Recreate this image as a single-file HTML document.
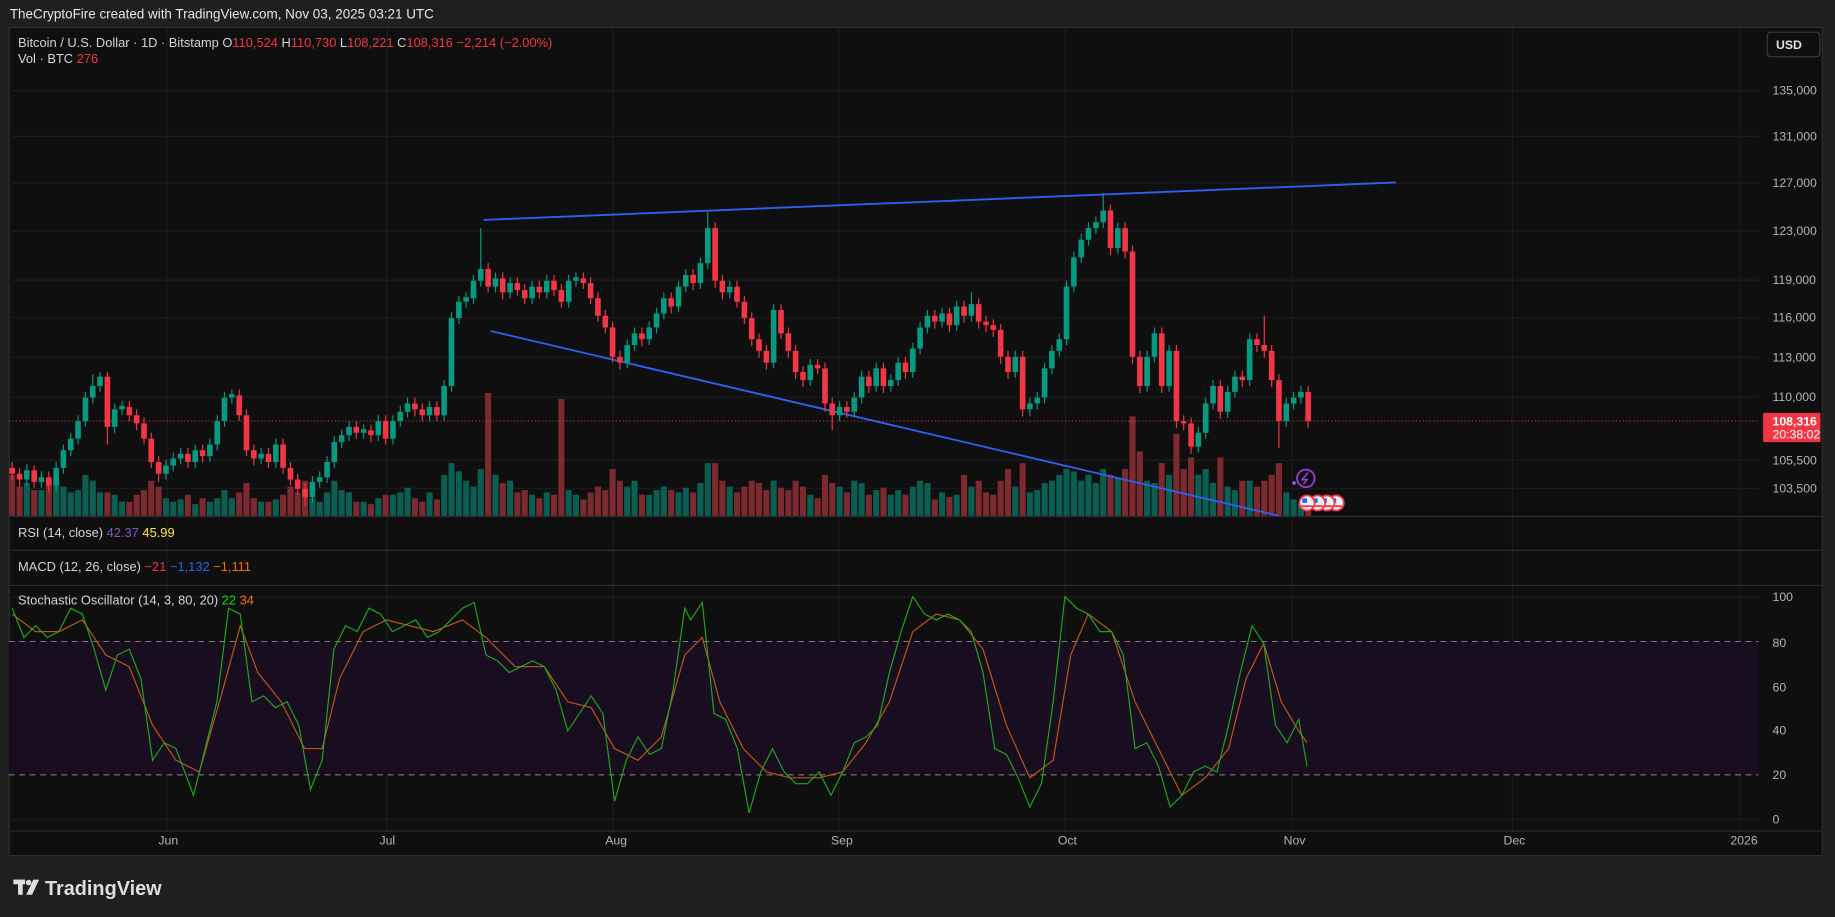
<!DOCTYPE html>
<html><head><meta charset="utf-8"><style>
html,body{margin:0;padding:0;background:#1f1f1f;overflow:hidden}
svg{display:block;font-family:"Liberation Sans",sans-serif}
</style></head><body>
<svg width="1835" height="917" viewBox="0 0 1568 784" xmlns="http://www.w3.org/2000/svg">
<rect x="0" y="0" width="1568" height="784" fill="#1f1f1f"/>
<text x="8" y="16" fill="#e6e6e6" font-size="11.5">TheCryptoFire created with TradingView.com, Nov 03, 2025 03:21 UTC</text>
<rect x="7.5" y="23.5" width="1550" height="708" fill="#0f0f0f" stroke="#2e2e2e"/>
<g stroke="#1c1c1c">
<line x1="7" y1="77.5" x2="1503" y2="77.5"/><line x1="7" y1="116.5" x2="1503" y2="116.5"/><line x1="7" y1="156.5" x2="1503" y2="156.5"/><line x1="7" y1="197.5" x2="1503" y2="197.5"/><line x1="7" y1="239.5" x2="1503" y2="239.5"/><line x1="7" y1="271.5" x2="1503" y2="271.5"/><line x1="7" y1="305.5" x2="1503" y2="305.5"/><line x1="7" y1="339.5" x2="1503" y2="339.5"/><line x1="7" y1="393.5" x2="1503" y2="393.5"/><line x1="7" y1="417.5" x2="1503" y2="417.5"/>
<line x1="7" y1="510.5" x2="1503" y2="510.5"/><line x1="7" y1="587.5" x2="1503" y2="587.5"/><line x1="7" y1="624.5" x2="1503" y2="624.5"/><line x1="7" y1="700.5" x2="1503" y2="700.5"/>
<line x1="142.5" y1="24" x2="142.5" y2="710"/><line x1="330.5" y1="24" x2="330.5" y2="710"/><line x1="523.5" y1="24" x2="523.5" y2="710"/><line x1="716.5" y1="24" x2="716.5" y2="710"/><line x1="910.5" y1="24" x2="910.5" y2="710"/><line x1="1104.5" y1="24" x2="1104.5" y2="710"/><line x1="1292.5" y1="24" x2="1292.5" y2="710"/><line x1="1487.5" y1="24" x2="1487.5" y2="710"/>
</g>
<rect x="7" y="548" width="1496" height="114" fill="#180e1f"/>
<g stroke="#888" stroke-dasharray="5,4" stroke-width="0.8"><line x1="7" y1="548.5" x2="1503" y2="548.5"/><line x1="7" y1="662.5" x2="1503" y2="662.5"/></g>
<g stroke="#2e2e2e"><line x1="7" y1="441.5" x2="1558" y2="441.5"/><line x1="7" y1="470.5" x2="1558" y2="470.5"/><line x1="7" y1="500.5" x2="1558" y2="500.5"/><line x1="7" y1="710.5" x2="1558" y2="710.5"/></g>
<clipPath id="mc"><rect x="7" y="24" width="1496" height="417"/></clipPath>
<g clip-path="url(#mc)">
<path fill="#7c2930" d="M7.4 406h5.2V441h-5.2zM13.7 416h5.2V441h-5.2zM26.2 419h5.2V441h-5.2zM38.7 411h5.2V441h-5.2zM88.8 421h5.2V441h-5.2zM107.6 429h5.2V441h-5.2zM113.8 423h5.2V441h-5.2zM120.1 419h5.2V441h-5.2zM126.3 411h5.2V441h-5.2zM132.6 416h5.2V441h-5.2zM157.6 423h5.2V441h-5.2zM170.2 426h5.2V441h-5.2zM201.5 421h5.2V441h-5.2zM207.7 413h5.2V441h-5.2zM214 426h5.2V441h-5.2zM226.5 429h5.2V441h-5.2zM239 423h5.2V441h-5.2zM245.3 416h5.2V441h-5.2zM251.5 421h5.2V441h-5.2zM257.8 411h5.2V441h-5.2zM301.6 429h5.2V441h-5.2zM314.1 431h5.2V441h-5.2zM326.7 423h5.2V441h-5.2zM351.7 426h5.2V441h-5.2zM358 429h5.2V441h-5.2zM370.5 427h5.2V441h-5.2zM414.3 336h5.2V441h-5.2zM426.8 413h5.2V441h-5.2zM439.3 421h5.2V441h-5.2zM445.6 419h5.2V441h-5.2zM458.1 426h5.2V441h-5.2zM470.6 423h5.2V441h-5.2zM476.9 341h5.2V441h-5.2zM495.7 427h5.2V441h-5.2zM501.9 421h5.2V441h-5.2zM508.2 416h5.2V441h-5.2zM514.5 419h5.2V441h-5.2zM520.7 401h5.2V441h-5.2zM527 411h5.2V441h-5.2zM545.8 423h5.2V441h-5.2zM570.8 419h5.2V441h-5.2zM589.6 421h5.2V441h-5.2zM608.4 396h5.2V441h-5.2zM614.6 411h5.2V441h-5.2zM627.1 421h5.2V441h-5.2zM633.4 416h5.2V441h-5.2zM639.7 411h5.2V441h-5.2zM645.9 413h5.2V441h-5.2zM652.2 419h5.2V441h-5.2zM664.7 417h5.2V441h-5.2zM671 419h5.2V441h-5.2zM677.2 411h5.2V441h-5.2zM683.5 416h5.2V441h-5.2zM696 426h5.2V441h-5.2zM702.3 406h5.2V441h-5.2zM708.5 413h5.2V441h-5.2zM721 421h5.2V441h-5.2zM739.8 423h5.2V441h-5.2zM752.3 417h5.2V441h-5.2zM771.1 423h5.2V441h-5.2zM796.2 427h5.2V441h-5.2zM808.7 425h5.2V441h-5.2zM821.2 406h5.2V441h-5.2zM833.7 411h5.2V441h-5.2zM840 421h5.2V441h-5.2zM846.2 423h5.2V441h-5.2zM852.5 411h5.2V441h-5.2zM858.8 401h5.2V441h-5.2zM871.3 396h5.2V441h-5.2zM946.4 406h5.2V441h-5.2zM958.9 401h5.2V441h-5.2zM965.2 356h5.2V441h-5.2zM971.5 386h5.2V441h-5.2zM990.2 396h5.2V441h-5.2zM1002.8 371h5.2V441h-5.2zM1009 401h5.2V441h-5.2zM1015.3 391h5.2V441h-5.2zM1040.3 391h5.2V441h-5.2zM1059.1 411h5.2V441h-5.2zM1071.6 416h5.2V441h-5.2zM1077.9 411h5.2V441h-5.2zM1084.2 406h5.2V441h-5.2zM1090.4 396h5.2V441h-5.2zM1115.4 429h5.2V441h-5.2z"/>
<path fill="#0b5e52" d="M19.9 413h5.2V441h-5.2zM32.4 419h5.2V441h-5.2zM45 411h5.2V441h-5.2zM51.2 416h5.2V441h-5.2zM57.5 421h5.2V441h-5.2zM63.7 419h5.2V441h-5.2zM70 406h5.2V441h-5.2zM76.3 411h5.2V441h-5.2zM82.5 421h5.2V441h-5.2zM95 423h5.2V441h-5.2zM101.3 429h5.2V441h-5.2zM138.9 426h5.2V441h-5.2zM145.1 429h5.2V441h-5.2zM151.4 427h5.2V441h-5.2zM163.9 431h5.2V441h-5.2zM176.4 429h5.2V441h-5.2zM182.7 426h5.2V441h-5.2zM188.9 419h5.2V441h-5.2zM195.2 426h5.2V441h-5.2zM220.2 429h5.2V441h-5.2zM232.8 427h5.2V441h-5.2zM264.1 426h5.2V441h-5.2zM270.3 429h5.2V441h-5.2zM276.6 421h5.2V441h-5.2zM282.8 411h5.2V441h-5.2zM289.1 419h5.2V441h-5.2zM295.4 421h5.2V441h-5.2zM307.9 429h5.2V441h-5.2zM320.4 426h5.2V441h-5.2zM332.9 423h5.2V441h-5.2zM339.2 421h5.2V441h-5.2zM345.4 417h5.2V441h-5.2zM364.2 421h5.2V441h-5.2zM376.7 406h5.2V441h-5.2zM383 396h5.2V441h-5.2zM389.3 403h5.2V441h-5.2zM395.5 411h5.2V441h-5.2zM401.8 416h5.2V441h-5.2zM408 401h5.2V441h-5.2zM420.6 406h5.2V441h-5.2zM433.1 411h5.2V441h-5.2zM451.9 423h5.2V441h-5.2zM464.4 421h5.2V441h-5.2zM483.2 419h5.2V441h-5.2zM489.4 423h5.2V441h-5.2zM533.2 416h5.2V441h-5.2zM539.5 411h5.2V441h-5.2zM552 423h5.2V441h-5.2zM558.3 419h5.2V441h-5.2zM564.5 416h5.2V441h-5.2zM577.1 421h5.2V441h-5.2zM583.3 417h5.2V441h-5.2zM595.8 413h5.2V441h-5.2zM602.1 396h5.2V441h-5.2zM620.9 416h5.2V441h-5.2zM658.4 411h5.2V441h-5.2zM689.7 423h5.2V441h-5.2zM714.8 416h5.2V441h-5.2zM727.3 411h5.2V441h-5.2zM733.6 413h5.2V441h-5.2zM746.1 419h5.2V441h-5.2zM758.6 423h5.2V441h-5.2zM764.9 419h5.2V441h-5.2zM777.4 416h5.2V441h-5.2zM783.6 411h5.2V441h-5.2zM789.9 413h5.2V441h-5.2zM802.4 421h5.2V441h-5.2zM814.9 423h5.2V441h-5.2zM827.5 416h5.2V441h-5.2zM865 416h5.2V441h-5.2zM877.5 421h5.2V441h-5.2zM883.8 419h5.2V441h-5.2zM890.1 413h5.2V441h-5.2zM896.3 411h5.2V441h-5.2zM902.6 406h5.2V441h-5.2zM908.8 401h5.2V441h-5.2zM915.1 403h5.2V441h-5.2zM921.4 411h5.2V441h-5.2zM927.6 406h5.2V441h-5.2zM933.9 413h5.2V441h-5.2zM940.2 401h5.2V441h-5.2zM952.7 409h5.2V441h-5.2zM977.7 411h5.2V441h-5.2zM984 413h5.2V441h-5.2zM996.5 406h5.2V441h-5.2zM1021.5 406h5.2V441h-5.2zM1027.8 401h5.2V441h-5.2zM1034.1 413h5.2V441h-5.2zM1046.6 416h5.2V441h-5.2zM1052.8 419h5.2V441h-5.2zM1065.4 411h5.2V441h-5.2zM1096.7 421h5.2V441h-5.2zM1103 427h5.2V441h-5.2zM1109.2 431h5.2V441h-5.2z"/>
<g stroke="#2f5ff0" stroke-width="1.6"><line x1="413" y1="188" x2="1193" y2="156"/><line x1="419" y1="283" x2="1093" y2="441"/></g>
<line x1="7" y1="360" x2="1503" y2="360" stroke="#f23645" stroke-dasharray="1,2" stroke-width="0.8"/>
<path stroke="#f23645" stroke-width="1" fill="none" d="M10 395V410M16.3 400V416M28.8 398V417M41.3 403V421M91.4 318V380M110.2 343V360M116.4 350V368M122.7 357V380M128.9 370V400M135.2 390V412M160.2 383V400M172.8 380V395M204.1 333V360M210.3 350V390M216.6 380V398M229.1 383V400M241.6 375V405M247.9 395V415M254.1 405V423M260.4 413V432M304.2 360V375M316.7 363V378M329.3 355V380M354.3 340V356M360.6 345V360M373.1 343V360M416.9 225V250M429.4 233V256M441.9 237V253M448.2 243V260M460.7 240V255M473.2 235V253M479.5 243V263M498.3 233V247M504.5 237V260M510.8 250V275M517.1 265V285M523.3 275V310M529.6 300V316M548.4 280V296M573.4 250V268M592.2 230V248M611 190V246M617.2 235V256M629.7 240V263M636 253V277M642.3 267V296M648.5 285V306M654.8 295V316M667.3 260V290M673.6 280V306M679.8 295V324M686.1 313V331M698.6 307V320M704.9 310V352M711.1 340V368M723.6 343V357M742.4 317V336M754.9 310V336M773.7 305V324M798.8 265V281M811.3 263V284M823.8 257V276M836.3 255V281M842.6 270V284M848.8 273V288M855.1 277V311M861.4 300V324M873.9 300V356M949 175V218M961.5 190V221M967.8 210V311M974.1 300V336M992.8 280V336M1005.4 295V366M1011.6 355V368M1017.9 357V388M1042.9 325V358M1061.7 317V331M1074.2 285V301M1080.5 270V306M1086.8 295V331M1093 320V383M1118 330V366"/>
<path stroke="#089981" stroke-width="1" fill="none" d="M22.5 397V415M35 403V417M47.6 395V420M53.8 380V405M60.1 370V390M66.3 355V380M72.6 335V365M78.9 320V345M85.1 318V335M97.6 345V370M103.9 343V355M141.5 393V410M147.7 387V403M154 383V397M166.5 380V400M179 375V395M185.3 355V385M191.5 335V365M197.8 333V345M222.8 383V397M235.4 375V400M266.7 407V430M272.9 403V417M279.2 390V413M285.4 373V400M291.7 367V383M298 360V377M310.5 363V375M323 355V377M335.5 355V380M341.8 347V365M348 340V357M366.8 343V360M379.3 325V360M385.6 267V335M391.9 253V277M398.1 250V263M404.4 235V260M410.6 195V245M423.2 233V250M435.7 237V255M454.5 240V260M467 235V255M485.8 235V263M492 233V245M535.8 290V315M542.1 280V300M554.6 275V295M560.9 263V285M567.1 250V273M579.7 240V267M585.9 230V250M598.4 220V247M604.7 181V230M623.5 240V255M661 260V315M692.3 307V330M717.4 343V360M729.9 335V357M736.2 317V345M748.7 310V335M761.2 320V335M767.5 305V330M780 293V323M786.2 275V303M792.5 265V285M805 263V280M817.5 257V283M830.1 250V275M867.6 300V323M880.1 340V356M886.4 335V350M892.7 310V345M898.9 295V320M905.2 285V305M911.4 240V295M917.7 215V250M924 200V225M930.2 190V210M936.5 185V200M942.8 165V195M955.3 190V217M980.3 300V335M986.6 280V310M999.1 295V335M1024.1 365V387M1030.4 340V375M1036.7 325V350M1049.2 330V357M1055.4 317V340M1068 285V330M1099.3 340V365M1105.6 335V350M1111.8 330V345"/>
<path fill="#f23645" d="M7.6 400h4.8V405h-4.8zM13.9 405h4.8V410h-4.8zM26.4 402h4.8V412h-4.8zM38.9 408h4.8V415h-4.8zM89 322h4.8V365h-4.8zM107.8 348h4.8V355h-4.8zM114 355h4.8V362h-4.8zM120.3 362h4.8V375h-4.8zM126.5 375h4.8V395h-4.8zM132.8 395h4.8V405h-4.8zM157.8 388h4.8V395h-4.8zM170.4 385h4.8V390h-4.8zM201.7 338h4.8V355h-4.8zM207.9 355h4.8V385h-4.8zM214.2 385h4.8V392h-4.8zM226.7 388h4.8V395h-4.8zM239.2 380h4.8V400h-4.8zM245.5 400h4.8V410h-4.8zM251.7 410h4.8V418h-4.8zM258 418h4.8V425h-4.8zM301.8 365h4.8V370h-4.8zM314.3 368h4.8V372h-4.8zM326.9 360h4.8V375h-4.8zM351.9 345h4.8V350h-4.8zM358.2 350h4.8V355h-4.8zM370.7 348h4.8V355h-4.8zM414.5 230h4.8V245h-4.8zM427 238h4.8V250h-4.8zM439.5 242h4.8V248h-4.8zM445.8 248h4.8V255h-4.8zM458.3 245h4.8V250h-4.8zM470.8 240h4.8V248h-4.8zM477.1 248h4.8V258h-4.8zM495.9 238h4.8V242h-4.8zM502.1 242h4.8V255h-4.8zM508.4 255h4.8V270h-4.8zM514.7 270h4.8V280h-4.8zM520.9 280h4.8V305h-4.8zM527.2 305h4.8V310h-4.8zM546 285h4.8V290h-4.8zM571 255h4.8V262h-4.8zM589.8 235h4.8V242h-4.8zM608.6 195h4.8V240h-4.8zM614.8 240h4.8V250h-4.8zM627.3 245h4.8V258h-4.8zM633.6 258h4.8V272h-4.8zM639.9 272h4.8V290h-4.8zM646.1 290h4.8V300h-4.8zM652.4 300h4.8V310h-4.8zM664.9 265h4.8V285h-4.8zM671.2 285h4.8V300h-4.8zM677.4 300h4.8V318h-4.8zM683.7 318h4.8V325h-4.8zM696.2 312h4.8V315h-4.8zM702.5 315h4.8V345h-4.8zM708.7 345h4.8V355h-4.8zM721.2 348h4.8V352h-4.8zM740 322h4.8V330h-4.8zM752.5 315h4.8V330h-4.8zM771.3 310h4.8V318h-4.8zM796.4 270h4.8V275h-4.8zM808.9 268h4.8V278h-4.8zM821.4 262h4.8V270h-4.8zM833.9 260h4.8V275h-4.8zM840.2 275h4.8V278h-4.8zM846.4 278h4.8V282h-4.8zM852.7 282h4.8V305h-4.8zM859 305h4.8V318h-4.8zM871.5 305h4.8V350h-4.8zM946.6 180h4.8V212h-4.8zM959.1 195h4.8V215h-4.8zM965.4 215h4.8V305h-4.8zM971.7 305h4.8V330h-4.8zM990.4 285h4.8V330h-4.8zM1003 300h4.8V360h-4.8zM1009.2 360h4.8V362h-4.8zM1015.5 362h4.8V382h-4.8zM1040.5 330h4.8V352h-4.8zM1059.3 322h4.8V325h-4.8zM1071.8 290h4.8V295h-4.8zM1078.1 295h4.8V300h-4.8zM1084.4 300h4.8V325h-4.8zM1090.6 325h4.8V360h-4.8zM1115.6 335h4.8V360h-4.8z"/>
<path fill="#089981" d="M20.1 410h4.8V402h-4.8zM32.6 412h4.8V408h-4.8zM45.2 415h4.8V400h-4.8zM51.4 400h4.8V385h-4.8zM57.7 385h4.8V375h-4.8zM63.9 375h4.8V360h-4.8zM70.2 360h4.8V340h-4.8zM76.5 340h4.8V330h-4.8zM82.7 330h4.8V322h-4.8zM95.2 365h4.8V350h-4.8zM101.5 350h4.8V347h-4.8zM139.1 405h4.8V398h-4.8zM145.3 398h4.8V392h-4.8zM151.6 392h4.8V388h-4.8zM164.1 395h4.8V385h-4.8zM176.6 390h4.8V380h-4.8zM182.9 380h4.8V360h-4.8zM189.1 360h4.8V340h-4.8zM195.4 340h4.8V337h-4.8zM220.4 392h4.8V388h-4.8zM233 395h4.8V380h-4.8zM264.3 425h4.8V412h-4.8zM270.5 412h4.8V408h-4.8zM276.8 408h4.8V395h-4.8zM283 395h4.8V378h-4.8zM289.3 378h4.8V372h-4.8zM295.6 372h4.8V365h-4.8zM308.1 370h4.8V367h-4.8zM320.6 372h4.8V360h-4.8zM333.1 375h4.8V360h-4.8zM339.4 360h4.8V352h-4.8zM345.6 352h4.8V345h-4.8zM364.4 355h4.8V348h-4.8zM376.9 355h4.8V330h-4.8zM383.2 330h4.8V272h-4.8zM389.5 272h4.8V258h-4.8zM395.7 258h4.8V254h-4.8zM402 255h4.8V240h-4.8zM408.2 240h4.8V230h-4.8zM420.8 245h4.8V238h-4.8zM433.3 250h4.8V242h-4.8zM452.1 255h4.8V245h-4.8zM464.6 250h4.8V240h-4.8zM483.4 258h4.8V240h-4.8zM489.6 240h4.8V237h-4.8zM533.4 310h4.8V295h-4.8zM539.7 295h4.8V285h-4.8zM552.2 290h4.8V280h-4.8zM558.5 280h4.8V268h-4.8zM564.7 268h4.8V255h-4.8zM577.3 262h4.8V245h-4.8zM583.5 245h4.8V235h-4.8zM596 242h4.8V225h-4.8zM602.3 225h4.8V195h-4.8zM621.1 250h4.8V245h-4.8zM658.6 310h4.8V265h-4.8zM689.9 325h4.8V312h-4.8zM715 355h4.8V348h-4.8zM727.5 352h4.8V340h-4.8zM733.8 340h4.8V322h-4.8zM746.3 330h4.8V315h-4.8zM758.8 330h4.8V325h-4.8zM765.1 325h4.8V310h-4.8zM777.6 318h4.8V298h-4.8zM783.8 298h4.8V280h-4.8zM790.1 280h4.8V270h-4.8zM802.6 275h4.8V268h-4.8zM815.1 278h4.8V262h-4.8zM827.7 270h4.8V260h-4.8zM865.2 318h4.8V305h-4.8zM877.7 350h4.8V345h-4.8zM884 345h4.8V340h-4.8zM890.3 340h4.8V315h-4.8zM896.5 315h4.8V300h-4.8zM902.8 300h4.8V290h-4.8zM909 290h4.8V245h-4.8zM915.3 245h4.8V220h-4.8zM921.6 220h4.8V205h-4.8zM927.8 205h4.8V195h-4.8zM934.1 195h4.8V190h-4.8zM940.4 190h4.8V180h-4.8zM952.9 212h4.8V195h-4.8zM977.9 330h4.8V305h-4.8zM984.2 305h4.8V285h-4.8zM996.7 330h4.8V300h-4.8zM1021.7 382h4.8V370h-4.8zM1028 370h4.8V345h-4.8zM1034.3 345h4.8V330h-4.8zM1046.8 352h4.8V335h-4.8zM1053 335h4.8V322h-4.8zM1065.6 325h4.8V290h-4.8zM1096.9 360h4.8V345h-4.8zM1103.2 345h4.8V340h-4.8zM1109.4 340h4.8V335h-4.8z"/>
</g>
<clipPath id="sc"><rect x="7" y="501" width="1496" height="209"/></clipPath>
<g clip-path="url(#sc)" fill="none" stroke-width="1">
<polyline stroke="#c0561a" points="10,525 30,540 50,540 70,530 90,560 110,570 130,620 150,650 170,660 190,590 205,535 220,575 240,600 260,640 275,640 290,580 310,540 330,530 350,535 370,540 395,530 415,545 440,570 465,570 485,600 505,605 525,640 545,650 565,630 585,560 600,545 615,600 635,640 655,660 675,665 700,665 720,660 740,635 760,600 780,540 800,525 820,530 840,555 860,620 880,665 900,650 915,560 930,525 950,540 970,600 990,640 1010,680 1030,665 1050,640 1065,580 1080,550 1095,600 1110,625 1117,635"/>
<polyline stroke="#1fa51f" points="10,520 20,545 30,535 40,545 50,540 60,520 70,525 80,555 90,590 100,560 110,555 120,580 130,650 140,635 150,640 165,680 175,640 185,600 195,520 205,525 215,600 225,595 235,605 245,600 255,620 265,675 275,650 285,555 295,535 305,540 315,520 325,525 335,540 345,535 355,530 365,545 375,540 385,530 395,520 405,515 415,560 425,565 435,575 445,570 455,565 465,570 475,590 485,625 495,610 505,595 515,610 525,685 535,650 545,630 555,645 565,640 575,590 585,520 590,530 600,515 610,610 620,615 630,640 640,695 650,660 660,640 670,660 680,670 690,670 700,660 710,680 720,660 730,635 740,630 750,620 760,575 770,540 780,510 790,525 800,530 810,525 820,530 830,540 840,575 850,640 860,645 870,665 880,690 890,670 900,600 910,510 920,520 930,525 940,540 950,540 960,560 970,640 980,635 990,655 1000,690 1010,680 1020,660 1030,655 1040,660 1050,620 1060,575 1070,535 1080,550 1090,620 1100,635 1110,615 1117,655"/>
</g>
<circle cx="1116" cy="409" r="7.5" fill="none" stroke="#9c3fd6" stroke-width="1.5"/><path d="M1118 404 L1113 410 L1117 410 L1114 414" stroke="#9c3fd6" fill="none" stroke-width="1.3"/>
<path d="M1104 413 l2 -2 l2 2 l-2 2z" fill="#8a5cf5"/>
<g>
<circle cx="1142" cy="430" r="6.5" fill="#eee" stroke="#f23645" stroke-width="1.5"/><rect x="1138" y="426" width="4" height="4" fill="#2962ff"/><rect x="1137" y="432" width="10" height="1.5" fill="#f23645"/>
<circle cx="1134" cy="430" r="6.5" fill="#eee" stroke="#f23645" stroke-width="1.5"/><rect x="1130" y="426" width="4" height="4" fill="#2962ff"/><rect x="1129" y="432" width="10" height="1.5" fill="#f23645"/>
<circle cx="1126" cy="430" r="6.5" fill="#eee" stroke="#f23645" stroke-width="1.5"/><rect x="1122" y="426" width="4" height="4" fill="#2962ff"/><rect x="1121" y="432" width="10" height="1.5" fill="#f23645"/>
<circle cx="1117" cy="430" r="6.5" fill="#eee" stroke="#f23645" stroke-width="1.5"/><rect x="1113" y="426" width="4" height="4" fill="#2962ff"/><rect x="1112" y="432" width="10" height="1.5" fill="#f23645"/>
</g>
<g font-size="11" fill="#d1d4dc">
<text x="15" y="40">Bitcoin / U.S. Dollar · 1D · Bitstamp  O<tspan fill="#f23645">110,524</tspan>  H<tspan fill="#f23645">110,730</tspan>  L<tspan fill="#f23645">108,221</tspan>  C<tspan fill="#f23645">108,316  −2,214 (−2.00%)</tspan></text>
<text x="15" y="54">Vol · BTC  <tspan fill="#f23645">276</tspan></text>
<text x="15" y="459">RSI (14, close)  <tspan fill="#7e57c2">42.37</tspan>  <tspan fill="#ffeb3b">45.99</tspan></text>
<text x="15" y="488">MACD (12, 26, close)  <tspan fill="#f23645">−21</tspan>  <tspan fill="#2962ff">−1,132</tspan>  <tspan fill="#ff6d00">−1,111</tspan></text>
<text x="15" y="517">Stochastic Oscillator (14, 3, 80, 20)  <tspan fill="#00e600">22</tspan> <tspan fill="#ff6d00">34</tspan></text>
</g>
<g font-size="10.5" fill="#b2b5be">
<text x="1515" y="81">135,000</text><text x="1515" y="120">131,000</text><text x="1515" y="160">127,000</text><text x="1515" y="201">123,000</text><text x="1515" y="243">119,000</text><text x="1515" y="275">116,000</text><text x="1515" y="309">113,000</text><text x="1515" y="343">110,000</text><text x="1515" y="397">105,500</text><text x="1515" y="421">103,500</text>
<text x="1515" y="514">100</text><text x="1515" y="553">80</text><text x="1515" y="591">60</text><text x="1515" y="628">40</text><text x="1515" y="666">20</text><text x="1515" y="704">0</text>
<text x="135" y="722">Jun</text><text x="324" y="722">Jul</text><text x="517" y="722">Aug</text><text x="710" y="722">Sep</text><text x="904" y="722">Oct</text><text x="1097" y="722">Nov</text><text x="1285" y="722">Dec</text><text x="1479" y="722">2026</text>
</g>
<rect x="1510.5" y="27.5" width="45" height="21" rx="3" fill="#0f0f0f" stroke="#3a3a3a"/>
<text x="1518" y="42" font-size="10.5" font-weight="bold" fill="#e0e0e0">USD</text>
<rect x="1507" y="353" width="49" height="25" fill="#f23645"/>
<text x="1515" y="364" font-size="10.5" font-weight="bold" fill="#fff">108,316</text>
<text x="1515" y="375" font-size="10.5" fill="#fff">20:38:02</text>
<g fill="#dedede"><rect x="11" y="752" width="10" height="4"/><rect x="15" y="752" width="4" height="13"/><circle cx="24" cy="754.5" r="2.4"/><path d="M28 752 L33 752 L27 765 L22 765 Z"/></g>
<text x="38" y="765" font-size="17" font-weight="bold" fill="#dedede">TradingView</text>
</svg>
</body></html>
